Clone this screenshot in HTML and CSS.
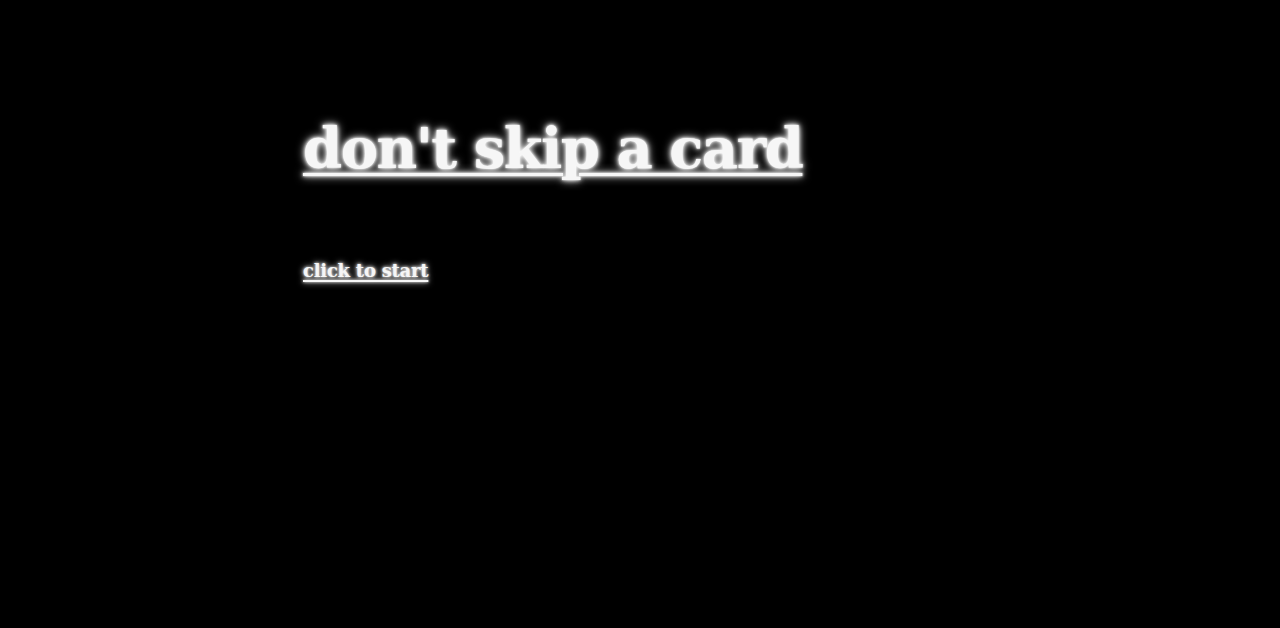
FILE: index.html
```html
<!DOCTYPE html>
<html>
<head>
<meta charset="utf-8">
<link rel="stylesheet" href="styles.css">
</head>
<body>
<main class="wrap">
  <h1 class="title"><a href="#">don't skip a card</a></h1>
  <p class="start"><a href="#">click to start</a></p>
</main>
</body>
</html>
```

FILE: styles.css
```css
html, body { background: #000; margin: 0; }
body { height: 628px; overflow: hidden; }
.wrap { padding-left: 303px; padding-top: 120px; }
.title {
  margin: 0;
  font-family: "DejaVu Serif", Georgia, serif;
  font-weight: bold;
  font-size: 56px;
  line-height: 56px;
  letter-spacing: -1.5px;
}
.title a, .start a {
  color: #f6f6f6;
  text-shadow: 0 0 10px #fff, 0 0 5px #fff, 0 0 2px #fff;
}
.title a { text-decoration-thickness: 3px; text-underline-offset: 5px; }
.start {
  margin: 86px 0 0;
  font-family: "DejaVu Serif", Georgia, serif;
  font-weight: bold;
  font-size: 18px;
  line-height: 18px;
  letter-spacing: -0.25px;
}
.start a { text-decoration-thickness: 2px; text-underline-offset: 3px; text-shadow: 0 0 6px #fff, 0 0 3px #fff; }
```
